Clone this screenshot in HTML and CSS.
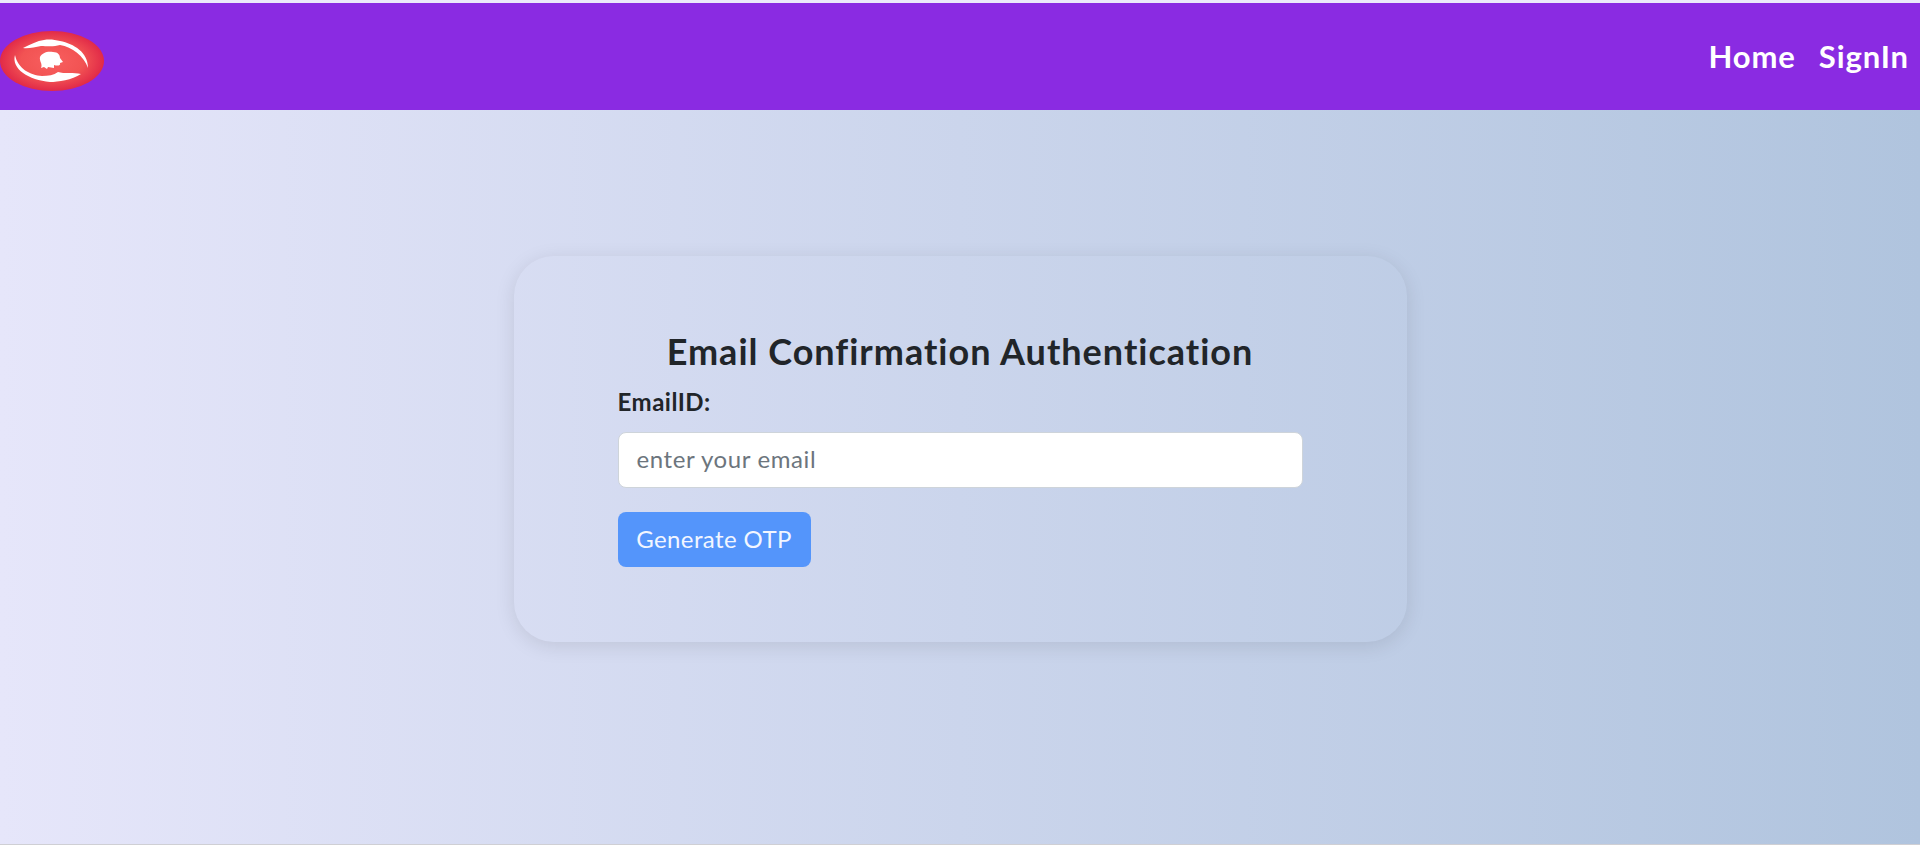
FILE: index.html
```html
<!DOCTYPE html>
<html lang="en">
<head>
<meta charset="utf-8">
<title>Email Confirmation Authentication</title>
<link rel="stylesheet" href="styles.css">
</head>
<body>
<nav class="navbar">
  <a class="logo" href="#" aria-label="Home">
    <svg class="logo-svg" viewBox="0 0 104 60" width="104" height="60" aria-hidden="true">
      <defs>
        <radialGradient id="logoFill" cx="50%" cy="50%" r="50%">
          <stop offset="0%" stop-color="#f85f5f"/>
          <stop offset="60%" stop-color="#f25353"/>
          <stop offset="100%" stop-color="#e12a48"/>
        </radialGradient>
      </defs>
      <ellipse cx="52" cy="30" rx="52" ry="30" fill="url(#logoFill)"/>
      <path fill="#fff" d="M23 17C31 13 37 10 44 9C50 8 55 9 60 10C74 13 88 21 88 37C84 25 72 16 60 14C54 16 46 15 41 15C35 16 28 18 23 17Z"/>
      <path fill="#fff" d="M15 24C11 38 29 49 50 51C58 51 72 49 81 43C74 41 64 43 58 41C54 44 48 45 42 45C30 44 18 38 15 24Z"/>
      <path fill="#fff" d="M40 26C42 22 47 20 53 21C58 21 60 24 60 27L63 31L60 32C61 35 57 35 54 34L54 37L48 36L47 38L44 36L41 37C43 33 39 30 40 26Z"/>
    </svg>
  </a>
  <div class="nav-links">
    <a class="nav-link" href="#">Home</a>
    <a class="nav-link" href="#">SignIn</a>
  </div>
</nav>
<main class="page">
  <form class="card">
    <h1 class="title">Email Confirmation Authentication</h1>
    <label class="field-label" for="email">EmailID:</label>
    <input class="field-input" id="email" type="email" placeholder="enter your email">
    <button class="submit" type="button">Generate OTP</button>
  </form>
</main>
</body>
</html>
```
FILE: styles.css
```css
* {
  box-sizing: border-box;
}

html,
body {
  height: 100%;
}

body {
  margin: 0;
  display: flex;
  flex-direction: column;
  overflow: hidden;
  font-family: "Lato", "Liberation Sans", sans-serif;
  color: #212529;
  background: linear-gradient(to right, #e6e6fa, #b0c4de);
  border-top: 3px solid #ebe9fa;
  border-bottom: 1px solid #cfcfd4;
}

.navbar {
  height: 107px;
  flex: none;
  display: flex;
  align-items: center;
  justify-content: space-between;
  padding-right: 11px;
  background: #8a2be2;
}

.logo {
  display: block;
  margin-top: 9px;
  line-height: 0;
}

.nav-links {
  display: flex;
  gap: 23px;
  margin-bottom: 2px;
}

.nav-link {
  font-size: 31px;
  font-weight: 700;
  line-height: 34px;
  letter-spacing: 0.9px;
  color: #fff;
  text-decoration: none;
}

.page {
  flex: 1;
  display: flex;
  justify-content: center;
  padding-top: 146px;
}

.card {
  width: 893px;
  height: 386px;
  display: flex;
  flex-direction: column;
  align-items: flex-start;
  padding: 73px 104px 0;
  border-radius: 40px;
  box-shadow: 0 4px 20px rgba(0, 0, 0, 0.1);
}

.title {
  width: 100%;
  margin: 0 0 14px;
  font-size: 36px;
  font-weight: 700;
  line-height: 44px;
  letter-spacing: 1px;
  text-align: center;
}

.field-label {
  margin-bottom: 15px;
  font-size: 24px;
  font-weight: 700;
  line-height: 30px;
  letter-spacing: 0.5px;
}

.field-input {
  width: 100%;
  height: 56px;
  padding: 0 18px 4px;
  border: 1px solid #ced4da;
  border-radius: 8px;
  background: #fff;
  font-family: inherit;
  font-size: 24px;
  font-weight: 400;
  letter-spacing: 0.6px;
  color: #212529;
}

.field-input::placeholder {
  color: #6c757d;
  opacity: 1;
}

.submit {
  height: 55px;
  width: 193px;
  margin-top: 24px;
  padding: 0 0 2px;
  border: 0;
  border-radius: 8px;
  background: #5495fb;
  font-family: inherit;
  font-size: 24px;
  font-weight: 400;
  letter-spacing: 0.4px;
  color: #f2f6ff;
}
```
